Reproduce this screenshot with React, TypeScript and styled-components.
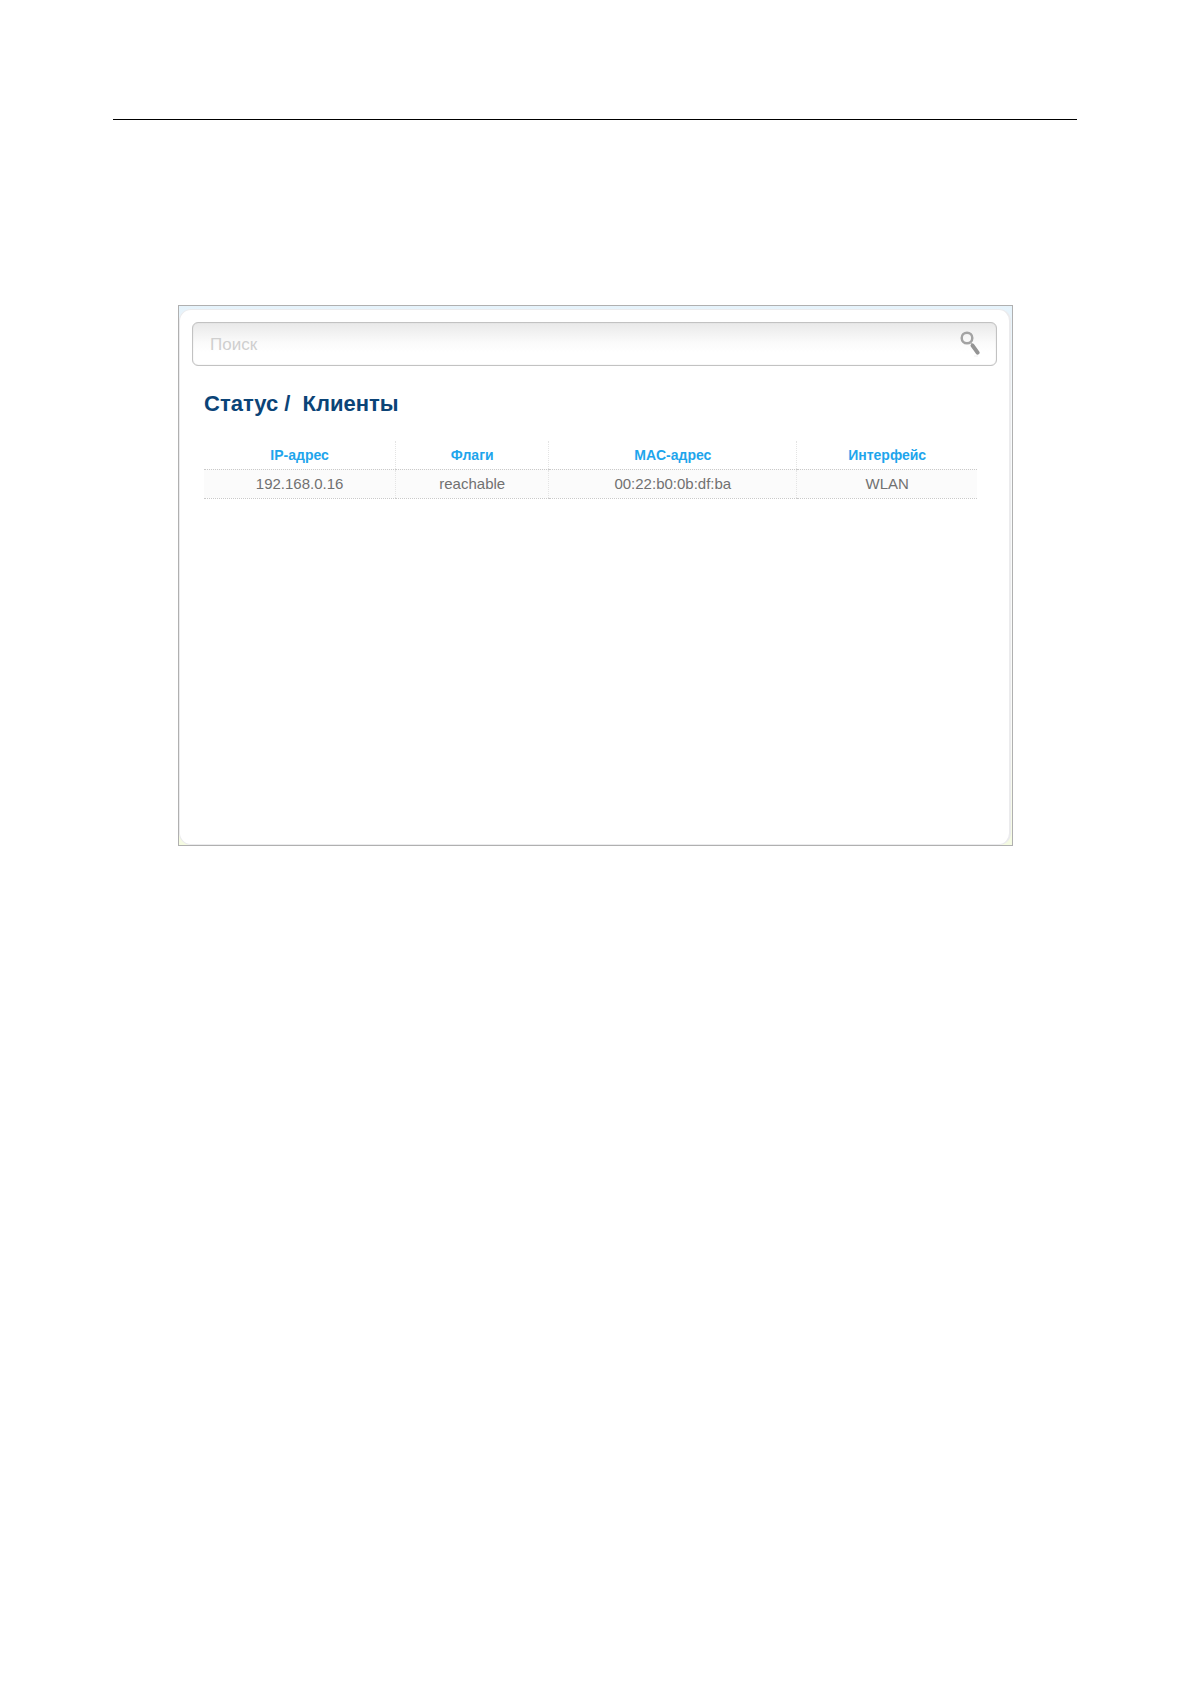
import React from "react";
import styled, { createGlobalStyle } from "styled-components";

const GlobalStyle = createGlobalStyle`
  *, *::before, *::after { box-sizing: border-box; }
  body {
    margin: 0;
    background: #fff;
    font-family: "Liberation Sans", Arial, sans-serif;
  }
`;

const Page = styled.div`
  padding: 119px 113px 0;
`;

const Rule = styled.hr`
  height: 1px;
  margin: 0 0 185px;
  border: 0;
  background: #000;
`;

const Frame = styled.main`
  display: flex;
  min-height: 541px;
  margin: 0 64px 0 65px;
  padding: 3px 1px 0 0;
  border: 1px solid #b0b0b0;
  background: linear-gradient(#e6f3fb, #f8fbfc 20%, #fafbf8 80%, #f5fbe2);
`;

const Panel = styled.section`
  flex: 1;
  min-width: 0;
  padding: 12px 12px 24px;
  border: 1px solid #ebebed;
  border-width: 1px 2px 1px 1px;
  border-radius: 12px;
  background: #fff;
`;

const SearchForm = styled.form`
  display: flex;
  align-items: center;
  height: 44px;
  margin-bottom: 25px;
  padding: 0 16px 0 17px;
  border: 1px solid #c2c2c2;
  border-radius: 6px;
  box-shadow: inset 0 0 1px #c4c4c4;
  background: linear-gradient(#e9e9e9, #fafafa 45%, #fff 70%);
`;

const SearchInput = styled.input`
  flex: 1;
  min-width: 0;
  padding: 1px 0 0;
  border: 0;
  outline: 0;
  background: transparent;
  color: #666;
  font: 17px/24px "Liberation Sans", Arial, sans-serif;

  &::placeholder {
    color: #cfcfcf;
    opacity: 1;
  }
`;

const SearchButton = styled.button`
  display: flex;
  padding: 0;
  border: 0;
  background: none;
  cursor: pointer;
`;

const Content = styled.div`
  padding: 0 20px 0 12px;
`;

const Title = styled.h1`
  margin: 0 0 24px;
  color: #0b4477;
  font-size: 22px;
  line-height: 26px;
  white-space: pre-wrap;
`;

const Table = styled.table`
  width: 100%;
  table-layout: fixed;
  border-collapse: collapse;
  text-align: center;
`;

const Column = styled.col<{ $share: number }>`
  width: ${({ $share }) => $share}%;
`;

const HeadCell = styled.th`
  height: 28px;
  padding: 0;
  border-bottom: 1px dotted #c9c9c9;
  color: #1ea5ec;
  font-size: 14px;
  line-height: 20px;

  & + & {
    border-left: 1px dotted #e4e4e4;
  }
`;

const Cell = styled.td`
  height: 29px;
  padding: 0;
  border-bottom: 1px dotted #c9c9c9;
  background: #fbfbfb;
  color: #717171;
  font-size: 15px;
  line-height: 20px;

  & + & {
    border-left: 1px dotted #e4e4e4;
  }
`;

const columns = [
  { label: "IP-адрес", share: 24.8 },
  { label: "Флаги", share: 19.8 },
  { label: "MAC-адрес", share: 32.1 },
  { label: "Интерфейс", share: 23.3 },
];

const clients = [["192.168.0.16", "reachable", "00:22:b0:0b:df:ba", "WLAN"]];

function SearchIcon() {
  return (
    <svg width="20" height="26" viewBox="0 0 20 26" fill="none" aria-hidden="true">
      <circle cx="7" cy="7" r="5.3" stroke="#a3a3a3" strokeWidth="2.5" />
      <path d="M10.6 11.4l1.8 2.2" stroke="#b5b5b5" strokeWidth="1.6" />
      <path d="M12.6 14.6l5 7" stroke="#949494" strokeWidth="4" strokeLinecap="round" />
      <path d="M14 25h4" stroke="#f0f0f0" />
    </svg>
  );
}

export default function App() {
  return (
    <Page>
      <GlobalStyle />
      <Rule />
      <Frame>
        <Panel>
          <SearchForm role="search" onSubmit={(e) => e.preventDefault()}>
            <SearchInput type="text" placeholder="Поиск" aria-label="Поиск" />
            <SearchButton type="submit" aria-label="Поиск">
              <SearchIcon />
            </SearchButton>
          </SearchForm>
          <Content>
            <Title>{"Статус /  Клиенты"}</Title>
            <Table>
              <colgroup>
                {columns.map((c) => (
                  <Column key={c.label} $share={c.share} />
                ))}
              </colgroup>
              <thead>
                <tr>
                  {columns.map((c) => (
                    <HeadCell key={c.label} scope="col">{c.label}</HeadCell>
                  ))}
                </tr>
              </thead>
              <tbody>
                {clients.map((row) => (
                  <tr key={row[0]}>
                    {row.map((value) => (
                      <Cell key={value}>{value}</Cell>
                    ))}
                  </tr>
                ))}
              </tbody>
            </Table>
          </Content>
        </Panel>
      </Frame>
    </Page>
  );
}
